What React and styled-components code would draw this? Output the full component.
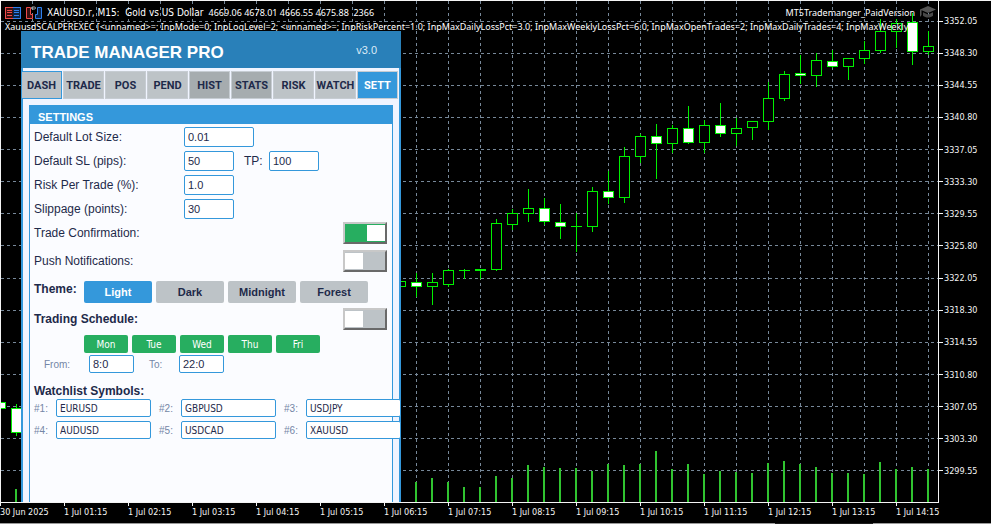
import { useState } from 'react';
import styled, { createGlobalStyle } from 'styled-components';

const GlobalStyle = createGlobalStyle`
  * {
    box-sizing: border-box;
    margin: 0;
    padding: 0;
  }

  body {
    background-color: #000;
    color: #1e2a4a;
    font-family: 'Liberation Sans', Arial, sans-serif;
    font-size: 12px;
    overflow: hidden;
  }

  button, input {
    font-family: inherit;
    color: inherit;
  }
`;

const chartFont = "'DejaVu Sans Condensed', 'DejaVu Sans', sans-serif";

const Screen = styled.main`
  display: grid;
  grid-template-columns: minmax(0, 1fr) 53px;
  grid-template-rows: minmax(0, 1fr) 22px;
  height: 100vh;
  border-top: 1px solid #f4f4f4;
`;

const ChartPane = styled.section`
  display: grid;
  grid-template-columns: minmax(0, 1fr);
  grid-template-rows: minmax(0, 1fr);
  border-left: 1px solid #f4f4f4;
  overflow: hidden;

  > * {
    grid-area: 1 / 1;
  }
`;

const ChartSvg = styled.svg`
  display: block;
  width: 100%;
  height: 100%;
`;

const ChartCaption = styled.header`
  align-self: start;
  color: #fff;
  font-family: 'Noto Sans', sans-serif;
  font-size: 9px;
  line-height: 14px;
  padding: 4px 0 0 4px;
  white-space: nowrap;
  overflow: hidden;
`;

const CaptionLine = styled.div`
  display: flex;
  align-items: center;
  gap: 5px;
  height: 15px;
  padding-right: 2px;

  svg {
    flex: none;
  }
`;

const Instrument = styled.span`
  font-family: ${chartFont};
  font-size: 10px;
`;

const ExpertName = styled.span`
  margin-left: auto;
`;

const Inputs = styled.p`
  height: 16px;
`;

const PriceAxis = styled.aside`
  display: flex;
  flex-direction: column;
  justify-content: space-between;
  padding: 12px 0 23px;
  border-left: 1px solid #f4f4f4;
`;

const Price = styled.span`
  display: flex;
  align-items: center;
  gap: 1px;
  height: 16px;
  color: #f4f4f4;
  font-family: ${chartFont};
  font-size: 9px;

  &::before {
    content: '';
    width: 4px;
    height: 1px;
    background: #f4f4f4;
  }
`;

const TimeAxis = styled.footer`
  grid-column: 1 / -1;
  display: grid;
  grid-template-columns: minmax(0, 1fr);
  grid-template-rows: 21px 1px;
`;

const Times = styled.div`
  display: flex;
  margin-right: 52px;
  border-top: 1px solid #f4f4f4;
`;

const Time = styled.span`
  flex: 0 0 64px;
  color: #f4f4f4;
  font-family: ${chartFont};
  font-size: 9px;
  line-height: 12px;
  white-space: nowrap;

  &::before {
    content: '';
    display: block;
    width: 1px;
    height: 3px;
    background: #f4f4f4;
  }
`;

const ScrollStrip = styled.div`
  display: grid;
  grid-template-columns: 775fr 98fr 118fr;
  background: #9a9a9a;

  &::before {
    content: '';
    grid-column: 2;
    background: #1c1c1c;
  }
`;

// Trade manager window
const Window = styled.section`
  display: flex;
  flex-direction: column;
  width: 380px;
  margin: 30px 0 0 20px;
  background: #f0f4ff;
  box-shadow: inset 2px 0 #3498db, inset -2px 0 #3498db;
  overflow: hidden;
`;

const WindowHeader = styled.header`
  display: flex;
  justify-content: space-between;
  height: 37px;
  padding: 0 24px 0 10px;
  background: #2980b9;
  color: #fff;
`;

const Title = styled.h1`
  font-size: 17px;
  line-height: 44px;
`;

const Version = styled.span`
  color: #dcebf7;
  font-size: 11px;
  line-height: 38px;
`;

const Tabs = styled.nav`
  display: flex;
  gap: 1px;
  padding: 3px 2px 6px 0;
`;

const tabColors = { plain: '#bdc3c7', dim: '#a6acaf', active: '#3498db' };

const Tab = styled.button`
  flex: 0 0 41px;
  height: 28px;
  background: ${props => tabColors[props.$kind]};
  color: ${props => (props.$kind === 'active' ? '#fff' : '#1e2a4a')};
  border: 1px solid ${props => (props.$focused ? '#3498db' : '#c6ccd2')};
  font-family: Roboto, sans-serif;
  font-size: 11px;
  font-weight: 700;
  white-space: nowrap;
  display: flex;
  align-items: center;
  justify-content: center;
`;

const Card = styled.div`
  flex: 1;
  margin: 0 8px;
  background: #fbfcff;
  border: solid #3498db;
  border-width: 0 1px;
`;

const CardTitle = styled.h2`
  height: 19px;
  padding-left: 8px;
  background: #3498db;
  color: #fff;
  font-size: 11px;
  line-height: 24px;
  overflow: hidden;
`;

const Form = styled.form`
  padding: 3px 5px 0 4px;
`;

const Fields = styled.div`
  display: grid;
  gap: 4px;
`;

const FieldRow = styled.div`
  display: grid;
  grid-template-columns: 150px 50px 35px 50px;
  align-items: center;
`;

const InlineLabel = styled.label`
  padding-left: 10px;
`;

const TextInput = styled.input`
  width: ${props => props.$width}px;
  height: ${props => (props.$small ? 18 : 20)}px;
  padding: 0 3px;
  background: #fff;
  border: 1px solid #3498db;
  border-radius: 2px;
  font-size: 11px;
  outline: none;
`;

const ToggleRow = styled.div`
  display: flex;
  align-items: center;
  justify-content: space-between;
  margin-top: ${props => props.$top}px;
`;

const Toggle = styled.input.attrs({ type: 'checkbox' })`
  appearance: none;
  display: flex;
  width: 44px;
  height: 22px;
  background: #bdc3c7;
  border: 2px solid;
  border-color: #c8c8c8 #696969 #696969 #c8c8c8;

  &::before {
    content: '';
    width: 18px;
    margin: 1px 0;
    background: #fff;
  }

  &:checked {
    justify-content: flex-end;
    background: #27ae60;
  }
`;

const BoldLabel = styled.label`
  font-weight: 700;
`;

const ThemeRow = styled.div`
  display: grid;
  grid-template-columns: 46px repeat(4, 68px);
  column-gap: 4px;
  margin-top: 9px;
`;

const GroupLabel = styled.span`
  font-weight: 700;
  line-height: 16px;
`;

const ThemeButton = styled.button`
  height: 22px;
  background: ${props => (props.$active ? '#3498db' : '#bdc3c7')};
  color: ${props => (props.$active ? '#fff' : '#1e2a4a')};
  border: none;
  border-radius: 2px;
  font-size: 11px;
  font-weight: 700;
`;

const Days = styled.div`
  display: flex;
  gap: 4px;
  margin: 5px 0 2px 50px;
`;

const DayButton = styled.button`
  width: 44px;
  height: 18px;
  background: ${props => (props.$on ? '#27ae60' : '#bdc3c7')};
  color: #fff;
  border: none;
  border-radius: 2px;
  font-family: ${chartFont};
  font-size: 10px;
`;

const Hours = styled.div`
  display: grid;
  grid-template-columns: 45px 60px 30px 45px;
  align-items: center;
  padding-left: 10px;
`;

const MutedLabel = styled.label`
  color: #7486a6;
  font-size: 10px;
`;

const WatchTitle = styled.h3`
  margin-top: 10px;
  font-size: 12px;
  line-height: 16px;
`;

const Watchlist = styled.div`
  display: grid;
  grid-template-columns: repeat(3, 125px);
  row-gap: 4px;
`;

const WatchItem = styled.div`
  display: grid;
  grid-template-columns: 22px 95px;
  align-items: center;
`;

const SymbolInput = styled(TextInput)`
  font-family: ${chartFont};
  font-size: 10px;
`;

const prices = [
  '3352.05', '3348.30', '3344.55', '3340.80', '3337.05', '3333.30', '3329.55', '3325.80',
  '3322.05', '3318.30', '3314.55', '3310.80', '3307.05', '3303.30', '3299.55',
];

const times = ['30 Jun 2025', ...Array.from({ length: 14 }, (_, i) => `1 Jul ${String(i + 1).padStart(2, '0')}:15`)];

const gridRows = [21, 53, 85, 117, 149, 181, 213, 245, 278, 310, 342, 374, 406, 438, 470];
const gridCols = Array.from({ length: 29 }, (_, i) => (i + 1) * 32);

// x, wick top, wick bottom, body top, body bottom, bearish
const candles = [
  [0, 402, 408, 402, 408, 1],
  [16, 404, 435, 408, 432, 1],
  [400, 281, 286, 281, 286, 0],
  [416, 273, 296, 282, 286, 1],
  [432, 273, 304, 282, 286, 0],
  [448, 269, 286, 270, 284, 0],
  [464, 269, 278, 270, 270, 0],
  [480, 269, 278, 269, 270, 0],
  [496, 219, 270, 223, 269, 0],
  [512, 209, 229, 213, 224, 0],
  [528, 189, 221, 208, 213, 0],
  [544, 198, 224, 208, 221, 1],
  [560, 204, 238, 222, 226, 1],
  [576, 213, 251, 226, 226, 0],
  [592, 187, 231, 191, 226, 0],
  [608, 171, 203, 191, 197, 1],
  [624, 147, 202, 156, 197, 0],
  [640, 134, 162, 136, 156, 0],
  [656, 124, 178, 136, 143, 1],
  [672, 125, 152, 128, 143, 0],
  [688, 106, 143, 128, 142, 1],
  [704, 120, 152, 125, 142, 0],
  [720, 103, 136, 125, 133, 1],
  [736, 118, 145, 128, 133, 0],
  [752, 121, 139, 121, 127, 0],
  [768, 82, 129, 98, 121, 0],
  [784, 71, 100, 74, 98, 0],
  [800, 55, 83, 73, 75, 1],
  [816, 53, 86, 60, 75, 0],
  [832, 50, 67, 61, 66, 1],
  [848, 58, 79, 58, 66, 0],
  [864, 41, 63, 50, 58, 0],
  [880, 19, 52, 31, 50, 0],
  [896, 19, 47, 23, 31, 0],
  [912, 13, 64, 22, 51, 1],
  [928, 31, 54, 46, 51, 0],
];

// tops of the volume bars, one every 16px from x=416
const volumes = [
  482, 478, 482, 487, 487, 476, 478, 465, 467, 468, 468, 471, 464, 465, 464, 451, 469,
  464, 474, 471, 472, 473, 463, 461, 464, 467, 473, 473, 474, 462, 469, 467, 469,
];

const Chart = () => (
  <ChartSvg viewBox="1 1 937 501" preserveAspectRatio="xMaxYMin slice" shapeRendering="crispEdges" aria-hidden="true">
    <g stroke="#778899" strokeDasharray="3 3">
      {gridRows.map(y => <line key={y} x1="1" x2="938" y1={y + 0.5} y2={y + 0.5} />)}
      {gridCols.map(x => <line key={x} x1={x + 0.5} x2={x + 0.5} y1="1" y2="502" />)}
    </g>
    <rect x="15" y="489" width="2" height="13" fill="#30c430" />
    {volumes.map((top, i) => (
      <rect key={i} x={415 + i * 16} y={top} width="2" height={502 - top} fill="#30c430" />
    ))}
    {candles.map(([x, high, low, top, bottom, bearish]) => (
      <g key={x} stroke="#00f000">
        <line x1={x + 0.5} x2={x + 0.5} y1={high} y2={low + 1} />
        {top === bottom
          ? <line x1={x - 5} x2={x + 6} y1={top + 0.5} y2={top + 0.5} />
          : <rect x={x - 4.5} y={top + 0.5} width="10" height={bottom - top} fill={bearish ? '#fff' : '#000'} />}
      </g>
    ))}
  </ChartSvg>
);

const DepthIcon = () => (
  <svg width="16" height="12" viewBox="0 0 16 12" shapeRendering="crispEdges" aria-hidden="true">
    <rect x="0" y="0" width="8" height="12" fill="#3a1010" />
    <rect x="8" y="0" width="8" height="12" fill="#0c2346" />
    <path d="M8 .5H.5v11H8M2 3.5h5M2 5.5h5M2 8.5h5" fill="none" stroke="#ee4a4a" />
    <path d="M8 .5h7.5v11H8M9 3.5h5M9 5.5h5M9 8.5h5" fill="none" stroke="#2f80ee" />
  </svg>
);

const TradeIcon = () => (
  <svg width="16" height="13" viewBox="0 0 16 13" aria-hidden="true">
    <path d="M4.5 1.5h-4v11h6v-4h-2z" fill="#3a1010" stroke="#ee4a4a" />
    <path d="M11.5 1.5h4v11h-6v-4h2z" fill="#0c2346" stroke="#2f80ee" />
    <rect x="5.5" y="1" width="4" height="2" rx="1" fill="none" stroke="#b0b0b0" />
  </svg>
);

const CapIcon = () => (
  <svg width="16" height="13" viewBox="0 0 16 13" aria-hidden="true">
    <path d="M8 0l8 3.5-8 3.5-6.5-2.8V9L0 11V4.2l-.2-.7z" fill="#555" />
    <path d="M3 6.2l5 2.2 5-2.2v3.6c-2.5 2.4-7.5 2.4-10 0z" fill="#484848" />
  </svg>
);

const tabs = [
  ['DASH', 'plain'], ['TRADE', 'plain'], ['POS', 'plain'], ['PEND', 'plain'], ['HIST', 'dim'],
  ['STATS', 'dim'], ['RISK', 'plain'], ['WATCH', 'plain'], ['SETT', 'active'],
];

const symbols = ['EURUSD', 'GBPUSD', 'USDJPY', 'AUDUSD', 'USDCAD', 'XAUUSD'];

const TradeManager = () => {
  const [theme, setTheme] = useState('Light');
  const [days, setDays] = useState(['Mon', 'Tue', 'Wed', 'Thu', 'Fri']);

  const toggleDay = (day) => {
    setDays(days.includes(day) ? days.filter(d => d !== day) : [...days, day]);
  };

  return (
    <Window>
      <WindowHeader>
        <Title>TRADE MANAGER PRO</Title>
        <Version>v3.0</Version>
      </WindowHeader>
      <Tabs>
        {tabs.map(([name, kind]) => (
          <Tab key={name} type="button" $kind={kind} $focused={name === 'DASH'}>{name}</Tab>
        ))}
      </Tabs>
      <Card>
        <CardTitle>SETTINGS</CardTitle>
        <Form>
          <Fields>
            <FieldRow>
              <label htmlFor="lot">Default Lot Size:</label>
              <TextInput id="lot" $width={70} defaultValue="0.01" />
            </FieldRow>
            <FieldRow>
              <label htmlFor="sl">Default SL (pips):</label>
              <TextInput id="sl" $width={50} defaultValue="50" />
              <InlineLabel htmlFor="tp">TP:</InlineLabel>
              <TextInput id="tp" $width={50} defaultValue="100" />
            </FieldRow>
            <FieldRow>
              <label htmlFor="risk">Risk Per Trade (%):</label>
              <TextInput id="risk" $width={50} defaultValue="1.0" />
            </FieldRow>
            <FieldRow>
              <label htmlFor="slippage">Slippage (points):</label>
              <TextInput id="slippage" $width={50} defaultValue="30" />
            </FieldRow>
          </Fields>
          <ToggleRow $top={3}>
            <label htmlFor="confirm">Trade Confirmation:</label>
            <Toggle id="confirm" defaultChecked />
          </ToggleRow>
          <ToggleRow $top={6}>
            <label htmlFor="push">Push Notifications:</label>
            <Toggle id="push" />
          </ToggleRow>
          <ThemeRow>
            <GroupLabel>Theme:</GroupLabel>
            {['Light', 'Dark', 'Midnight', 'Forest'].map(name => (
              <ThemeButton key={name} type="button" $active={theme === name} onClick={() => setTheme(name)}>
                {name}
              </ThemeButton>
            ))}
          </ThemeRow>
          <ToggleRow $top={5}>
            <BoldLabel htmlFor="schedule">Trading Schedule:</BoldLabel>
            <Toggle id="schedule" />
          </ToggleRow>
          <Days>
            {['Mon', 'Tue', 'Wed', 'Thu', 'Fri'].map(day => (
              <DayButton key={day} type="button" $on={days.includes(day)} onClick={() => toggleDay(day)}>
                {day}
              </DayButton>
            ))}
          </Days>
          <Hours>
            <MutedLabel htmlFor="from">From:</MutedLabel>
            <TextInput id="from" $small $width={45} defaultValue="8:0" />
            <MutedLabel htmlFor="to">To:</MutedLabel>
            <TextInput id="to" $small $width={45} defaultValue="22:0" />
          </Hours>
          <WatchTitle>Watchlist Symbols:</WatchTitle>
          <Watchlist>
            {symbols.map((symbol, i) => (
              <WatchItem key={symbol}>
                <MutedLabel htmlFor={`symbol${i}`}>#{i + 1}:</MutedLabel>
                <SymbolInput id={`symbol${i}`} $small $width={95} defaultValue={symbol} />
              </WatchItem>
            ))}
          </Watchlist>
        </Form>
      </Card>
    </Window>
  );
};

function App() {
  return (
    <>
      <GlobalStyle />
      <Screen>
        <ChartPane>
          <Chart />
          <ChartCaption>
            <CaptionLine>
              <DepthIcon />
              <TradeIcon />
              <Instrument>XAUUSD.r, M15:&nbsp; Gold vs US Dollar</Instrument>
              <span>4669.06 4678.01 4666.55 4675.88&nbsp; 2366</span>
              <ExpertName>MT5Trademanger_PaidVersion</ExpertName>
              <CapIcon />
            </CaptionLine>
            <Inputs>
              XauusdSCALPEREXEC [&lt;unnamed&gt;=; InpMode=0; InpLogLevel=2; &lt;unnamed&gt;=; InpRiskPercent=1.0;
              {' '}InpMaxDailyLossPct=3.0; InpMaxWeeklyLossPct=6.0; InpMaxOpenTrades=2; InpMaxDailyTrades=4;
              {' '}InpMaxWeeklyT
            </Inputs>
          </ChartCaption>
          <TradeManager />
        </ChartPane>
        <PriceAxis>
          {prices.map(price => <Price key={price}>{price}</Price>)}
        </PriceAxis>
        <TimeAxis>
          <Times>
            {times.map(time => <Time key={time}>{time}</Time>)}
          </Times>
          <ScrollStrip />
        </TimeAxis>
      </Screen>
    </>
  );
}

export default App;
